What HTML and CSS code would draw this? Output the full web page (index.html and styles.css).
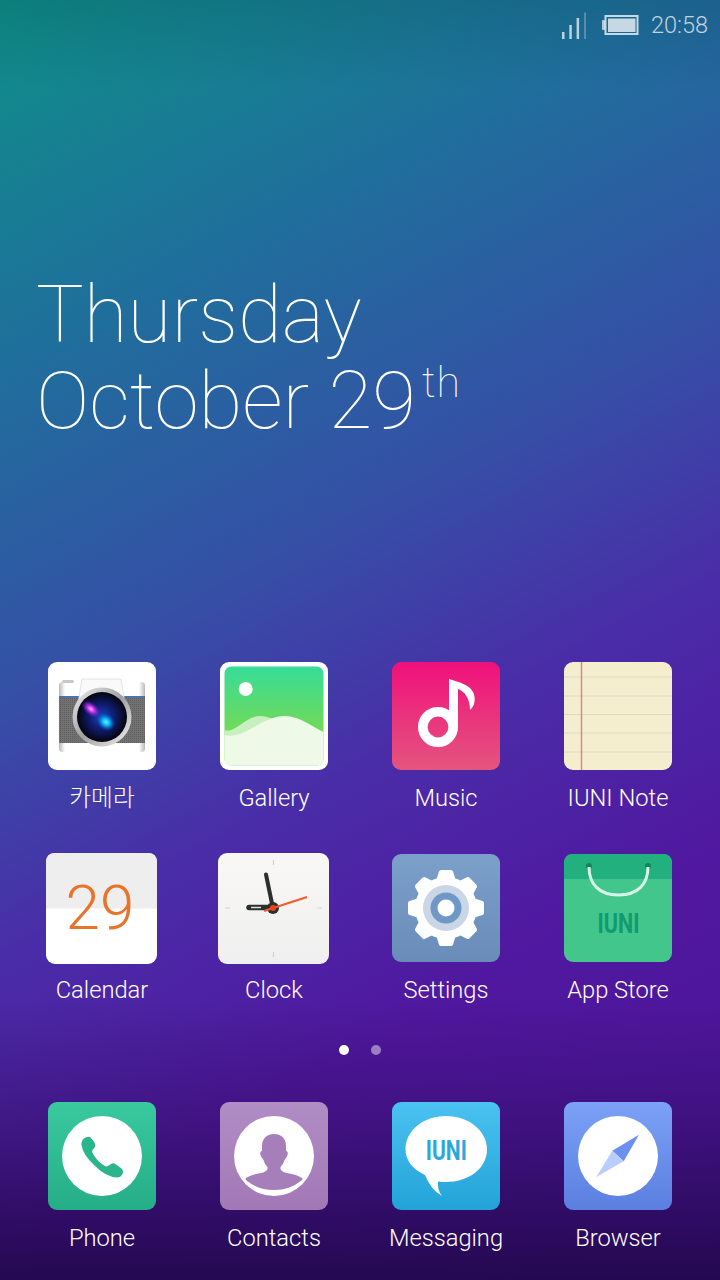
FILE: index.html
```html
<!DOCTYPE html>
<html lang="en">
<head>
<meta charset="utf-8">
<title>Home screen</title>
<link rel="stylesheet" href="styles.css">
</head>
<body>
<main class="screen">
  <header class="status">
    <svg class="signal" width="24" height="28" viewBox="0 0 24 28">
      <rect x="0" y="21" width="2.500" height="7" fill="#fff" fill-opacity=".7"/>
      <rect x="7.300" y="14" width="2.500" height="14" fill="#fff" fill-opacity=".7"/>
      <rect x="14.600" y="7" width="2.500" height="21" fill="#fff" fill-opacity=".7"/>
      <rect x="22" y="1.500" width="2" height="26.500" fill="#fff" fill-opacity=".25"/>
    </svg>
    <svg class="battery" width="37" height="20" viewBox="0 0 37 20">
      <rect x="0" y="5" width="3" height="10" rx="1" fill="#fff" fill-opacity=".65"/>
      <rect x="3.500" y="1" width="32" height="18" fill="none" stroke="#fff" stroke-opacity=".75" stroke-width="2"/>
      <rect x="6" y="3.500" width="27.500" height="13.500" fill="#fff" fill-opacity=".75"/>
    </svg>
    <span class="time">20:58</span>
  </header>

  <section class="date">
    <div class="date-line">Thursday</div>
    <div class="date-line">October 29<span class="ordinal">th</span></div>
  </section>

  <section class="apps">
    <div class="app">
      <svg class="icon" viewBox="0 0 108 108">
        <defs>
          <radialGradient id="lens" cx=".5" cy=".5" r=".5"><stop offset="0" stop-color="#1746c0"/><stop offset=".5" stop-color="#101c6e"/><stop offset="1" stop-color="#04050e"/></radialGradient>
          <linearGradient id="ring" x1="0" y1="0" x2="1" y2="1"><stop offset="0" stop-color="#f0f0f0"/><stop offset=".5" stop-color="#a0a0a0"/><stop offset="1" stop-color="#f4f4f4"/></linearGradient>
          <linearGradient id="camtop" x1="0" y1="0" x2="1" y2="0"><stop offset="0" stop-color="#b8b8b8"/><stop offset=".07" stop-color="#ffffff"/><stop offset=".93" stop-color="#ffffff"/><stop offset="1" stop-color="#b8b8b8"/></linearGradient>
          <radialGradient id="glowp"><stop offset="0" stop-color="#ffb0f4"/><stop offset=".4" stop-color="#c030f0"/><stop offset="1" stop-color="#5020c0" stop-opacity="0"/></radialGradient>
          <radialGradient id="glowb"><stop offset="0" stop-color="#60f4ff"/><stop offset=".4" stop-color="#08b4f8"/><stop offset="1" stop-color="#1060d0" stop-opacity="0"/></radialGradient>
          <pattern id="mesh" width="2" height="2" patternUnits="userSpaceOnUse"><rect width="2" height="2" fill="#727272"/><rect width="1" height="1" fill="#5e5e5e"/></pattern>
        </defs>
        <rect width="108" height="108" rx="9" fill="#fff"/>
        <rect x="11" y="20" width="86" height="70" rx="3.500" fill="url(#camtop)"/>
        <rect x="14" y="18" width="12" height="3" rx="1.500" fill="#c8c8c8"/>
        <rect x="11" y="34" width="86" height="47" fill="url(#mesh)"/>
        <rect x="11" y="34" width="86" height="1.200" fill="#3f70d8"/>
        <path d="M34 17h39l5 30H29z" fill="#fafafa" stroke="#d4d4d4" stroke-width=".6"/>
        <circle cx="54" cy="55" r="29.500" fill="url(#ring)"/>
        <circle cx="54" cy="55" r="25" fill="url(#lens)"/>
        <ellipse cx="43" cy="47" rx="11" ry="6.500" transform="rotate(40 43 47)" fill="url(#glowp)"/>
        <ellipse cx="58" cy="60" rx="10" ry="8" transform="rotate(40 58 60)" fill="url(#glowb)"/>
      </svg>
      <span class="label">카메라</span>
    </div>

    <div class="app">
      <svg class="icon" viewBox="0 0 108 108">
        <defs><linearGradient id="grass" x1="0" y1="0" x2="0" y2="1"><stop offset="0" stop-color="#36dc98"/><stop offset=".65" stop-color="#72da58"/></linearGradient></defs>
        <rect width="108" height="108" rx="9" fill="#fff"/>
        <rect x="4.500" y="4.500" width="99" height="99" rx="7" fill="url(#grass)"/>
        <circle cx="25.700" cy="27" r="7" fill="#fff"/>
        <path d="M4.500 68C15 72 25 54 40 54c10 0 16 6 30 6 14 0 24 8 33.500 14v22.500q0 7-7 7h-85q-7 0-7-7z" fill="#c8efc0"/>
        <path d="M4.500 90V73C24 78 42 54 65 54c14 0 26 10 38.500 16v26.500q0 7-7 7h-85q-7 0-7-7z" fill="#eff9e8"/>
      </svg>
      <span class="label">Gallery</span>
    </div>

    <div class="app">
      <svg class="icon" viewBox="0 0 108 108">
        <defs><linearGradient id="pink" x1="0" y1="0" x2="0" y2="1"><stop offset="0" stop-color="#f0107c"/><stop offset="1" stop-color="#e4557e"/></linearGradient></defs>
        <rect width="108" height="108" rx="9" fill="url(#pink)"/>
        <circle cx="46" cy="65" r="15.200" fill="none" stroke="#fff" stroke-width="9.600"/>
        <path d="M57 17v48h9V27c6 2 12 9 12 21 5-4 6-12 3-18-4-8-15-10-24-13z" fill="#fff"/>
      </svg>
      <span class="label">Music</span>
    </div>

    <div class="app">
      <svg class="icon" viewBox="0 0 108 108">
        <rect width="108" height="108" rx="9" fill="#f4eecf"/>
        <path d="M0 15h108M0 34h108M0 52.500h108M0 71h108M0 90h108" stroke="#dedabf" stroke-width="1.200"/>
        <path d="M17.500 0v108" stroke="#d88a8a" stroke-width="1.500"/>
      </svg>
      <span class="label">IUNI Note</span>
    </div>

    <div class="app">
      <svg class="icon icon-large" viewBox="0 0 111 111">
        <rect width="111" height="111" rx="9" fill="#fff"/>
        <path d="M0 55.500V9q0-9 9-9h93q9 0 9 9v46.500z" fill="#eeeeee"/>
        <text class="cal-day" x="54" y="76" text-anchor="middle">29</text>
      </svg>
      <span class="label">Calendar</span>
    </div>

    <div class="app">
      <svg class="icon icon-large" viewBox="0 0 111 111">
        <defs><linearGradient id="clockface" x1="0" y1="0" x2="0" y2="1"><stop offset="0" stop-color="#f9f8f6"/><stop offset="1" stop-color="#efefef"/></linearGradient></defs>
        <rect width="111" height="111" rx="9" fill="url(#clockface)"/>
        <path d="M55.500 7v5M55.500 99v5M7 55h5M99 55h5" stroke="#d2d2d2" stroke-width="1.200"/>
        <path d="M48 21.500l7 34" stroke="#2a302e" stroke-width="4" stroke-linecap="round"/>
        <path d="M31 54.500h24" stroke="#2a302e" stroke-width="5.500" stroke-linecap="round"/>
        <path d="M33 54.500h10" stroke="#ddd" stroke-width="1.500"/>
        <circle cx="55" cy="55" r="6" fill="#2a302e"/>
        <path d="M46 58L89 44" stroke="#f85a2c" stroke-width="2"/>
        <circle cx="55" cy="55" r="3" fill="#e8421e"/>
      </svg>
      <span class="label">Clock</span>
    </div>

    <div class="app">
      <svg class="icon" viewBox="0 0 108 108">
        <defs>
          <linearGradient id="steel" x1="0" y1="0" x2="0" y2="1"><stop offset="0" stop-color="#7ba0ca"/><stop offset="1" stop-color="#698cb8"/></linearGradient>
          <path id="tooth" d="M44 27l3-9.500q.5-1.500 2-1.500h10q1.500 0 2 1.500l3 9.500z"/>
        </defs>
        <rect width="108" height="108" rx="9" fill="url(#steel)"/>
        <g fill="#fff">
          <circle cx="54" cy="54" r="31"/>
          <use href="#tooth"/>
          <use href="#tooth" transform="rotate(45 54 54)"/>
          <use href="#tooth" transform="rotate(90 54 54)"/>
          <use href="#tooth" transform="rotate(135 54 54)"/>
          <use href="#tooth" transform="rotate(180 54 54)"/>
          <use href="#tooth" transform="rotate(225 54 54)"/>
          <use href="#tooth" transform="rotate(270 54 54)"/>
          <use href="#tooth" transform="rotate(315 54 54)"/>
        </g>
        <circle cx="54" cy="54" r="23" fill="#c9d6e5"/>
        <circle cx="54" cy="54" r="15.500" fill="#7098c6"/>
        <circle cx="54" cy="54" r="8.500" fill="#fff"/>
      </svg>
      <span class="label">Settings</span>
    </div>

    <div class="app">
      <svg class="icon" viewBox="0 0 108 108">
        <rect width="108" height="108" rx="9" fill="#42c68c"/>
        <path d="M0 25V9q0-9 9-9h90q9 0 9 9v16z" fill="#22b07e"/>
        <circle cx="25" cy="12" r="3" fill="#14845e"/>
        <circle cx="84" cy="12" r="3" fill="#14845e"/>
        <path d="M25 13c0 17 10 28 29.500 28S84 30 84 13" fill="none" stroke="#d9f5ea" stroke-width="3"/>
        <text class="brand brand-store" x="54.500" y="79" text-anchor="middle" textLength="42" lengthAdjust="spacingAndGlyphs">IUNI</text>
      </svg>
      <span class="label">App Store</span>
    </div>
  </section>

  <nav class="dots">
    <span class="dot dot-active"></span>
    <span class="dot"></span>
  </nav>

  <section class="dock">
    <div class="app">
      <svg class="icon" viewBox="0 0 108 108">
        <defs><linearGradient id="teal" x1="0" y1="0" x2="0" y2="1"><stop offset="0" stop-color="#3ac99e"/><stop offset="1" stop-color="#25ad87"/></linearGradient></defs>
        <rect width="108" height="108" rx="9" fill="url(#teal)"/>
        <circle cx="54" cy="54" r="40" fill="#fff"/>
        <path d="M36 36.500Q39 34 42 35L45.500 39Q48 42.500 47 45L44.500 48Q43.500 49.500 45 52 50 60 56 63.500 58.500 65 60 64L63 62Q65 60.500 68 62.500L73.500 66.500Q76 69 74.500 72 72.500 75.500 69 75.500 58 75 46.500 63.500 34.500 52 33.500 43 33 39 36 36.500Z" fill="#2ab58c"/>
      </svg>
      <span class="label">Phone</span>
    </div>

    <div class="app">
      <svg class="icon" viewBox="0 0 108 108">
        <defs><linearGradient id="lilac" x1="0" y1="0" x2="0" y2="1"><stop offset="0" stop-color="#b08dc5"/><stop offset="1" stop-color="#a278b6"/></linearGradient></defs>
        <rect width="108" height="108" rx="9" fill="url(#lilac)"/>
        <circle cx="54" cy="54" r="40" fill="#fff"/>
        <path d="M54 32C46 32 42 37 42 44L42 49Q39.500 49 40.500 53 41.500 56 43 57 44.500 62 47.500 65L47.500 67Q46 70 41 71 31 72.500 26 76 25 77 26.500 78.500 38 88 54 88 70 88 81.500 78.500 83 77 82 76 77 72.500 67 71 62 70 60.500 67L60.500 65Q63.500 62 65 57 66.500 56 67.500 53 68.500 49 66 49L66 44C66 37 62 32 54 32Z" fill="#a67fba"/>
      </svg>
      <span class="label">Contacts</span>
    </div>

    <div class="app">
      <svg class="icon" viewBox="0 0 108 108">
        <defs><linearGradient id="sky" x1="0" y1="0" x2="0" y2="1"><stop offset="0" stop-color="#4bc2f1"/><stop offset="1" stop-color="#22a3d8"/></linearGradient></defs>
        <rect width="108" height="108" rx="9" fill="url(#sky)"/>
        <path d="M54 14C76.500 14 95 28.500 95 47.500S76.500 80 54 80Q50 80 46 79.500 45 87.500 50 94 39 88 33 73C20 67 13.500 58 13.500 47.500 13.500 28.500 31.500 14 54 14Z" fill="#fff"/>
        <text class="brand brand-msg" x="54.300" y="58" text-anchor="middle" textLength="41" lengthAdjust="spacingAndGlyphs">IUNI</text>
      </svg>
      <span class="label">Messaging</span>
    </div>

    <div class="app">
      <svg class="icon" viewBox="0 0 108 108">
        <defs><linearGradient id="azure" x1="0" y1="0" x2="0" y2="1"><stop offset="0" stop-color="#7ca1f6"/><stop offset="1" stop-color="#5a7fe0"/></linearGradient></defs>
        <rect width="108" height="108" rx="9" fill="url(#azure)"/>
        <circle cx="54" cy="54" r="40" fill="#fff"/>
        <path d="M75 32.700L48.300 48.700 59.700 59.300z" fill="#6c90f2"/>
        <path d="M32.300 75L48.300 48.700 59.700 59.300z" fill="#b9cdff"/>
      </svg>
      <span class="label">Browser</span>
    </div>
  </section>
</main>
</body>
</html>
```

FILE: styles.css
```css
* { box-sizing: border-box; }

html, body {
  margin: 0;
  padding: 0;
}

.screen {
  width: 720px;
  height: 1280px;
  overflow: hidden;
  display: flex;
  flex-direction: column;
  font-family: Roboto, "Noto Sans CJK KR", sans-serif;
  color: #fff;
  background:
    linear-gradient(to bottom, rgba(0, 20, 50, .14), rgba(0, 20, 50, 0) 90px),
    linear-gradient(to bottom, rgba(20, 0, 50, 0) 1000px, rgba(25, 5, 55, .3) 1130px, rgba(25, 5, 60, .78) 1280px),
    linear-gradient(152deg, #0e9088 0%, #1f6f9c 22%, #3550a6 42%, #4a2ca8 58%, #50179f 75%, #4b1599 100%);
}

.status {
  height: 50px;
  padding: 0 12px 0 0;
  display: flex;
  justify-content: flex-end;
  align-items: center;
}

.signal { margin-right: 16px; }
.battery { margin-right: 12px; }

.time {
  font-size: 23.500px;
  font-weight: 300;
  color: rgba(255, 255, 255, .72);
}

.date {
  margin-top: 222px;
  padding-left: 36px;
}

.date-line {
  height: 86px;
  line-height: 86px;
  font-size: 80px;
  font-weight: 100;
  white-space: nowrap;
}

.ordinal {
  margin-left: 6px;
  font-size: 43px;
  letter-spacing: 1px;
  vertical-align: 31px;
  line-height: 0;
}

.apps, .dock {
  display: grid;
  grid-template-columns: repeat(4, 172px);
  padding: 0 16px;
}

.apps {
  margin-top: 218px;
  row-gap: 41px;
}

.app {
  display: flex;
  flex-direction: column;
  align-items: center;
}

.icon {
  width: 108px;
  height: 108px;
  display: block;
  flex: none;
}

.icon-large {
  width: 111px;
  height: 111px;
  margin: -1px 1px -2px 0;
}

.label {
  margin-top: 13px;
  height: 30px;
  line-height: 30px;
  font-size: 23.700px;
  font-weight: 300;
  white-space: nowrap;
}

.cal-day {
  font-family: Roboto, sans-serif;
  font-size: 62px;
  font-weight: 300;
  fill: #e8742a;
}

.brand {
  font-family: Roboto, sans-serif;
  font-weight: 700;
}

.brand-store {
  font-size: 27px;
  fill: #119a70;
}

.brand-msg {
  font-size: 28px;
  fill: #2aa8dc;
}

.dots {
  margin-top: 39px;
  height: 12px;
  display: flex;
  justify-content: center;
  align-items: center;
  gap: 22px;
}

.dot {
  width: 10px;
  height: 10px;
  border-radius: 50%;
  background: rgba(255, 255, 255, .45);
}

.dot-active {
  background: #fff;
}

.dock {
  margin-top: 46px;
}
```
